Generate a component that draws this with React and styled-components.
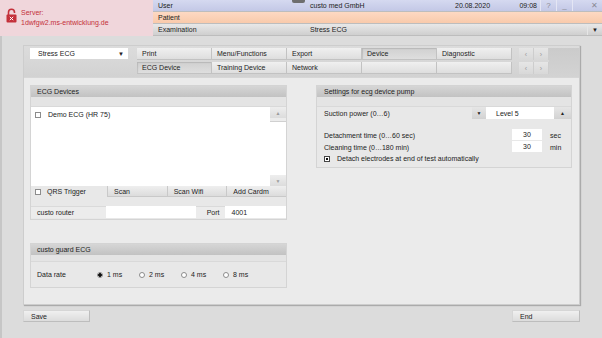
import React from 'react';
import styled, { createGlobalStyle, css } from 'styled-components';

const GlobalStyle = createGlobalStyle`
  html, body {
    margin: 0;
    padding: 0;
  }
  body {
    width: 602px;
    height: 338px;
    overflow: hidden;
    background: #dcdcdc;
    font-family: "Liberation Sans", Arial, sans-serif;
    font-size: 7px;
    color: #222;
  }
  * {
    box-sizing: border-box;
  }
`;

function LockIcon() {
  return (
    <svg width="11" height="15" viewBox="0 0 11 15">
      <path d="M2.5 7V4.2a3 3 0 0 1 6 0V5" fill="none" stroke="#c4303a" strokeWidth="1.6" />
      <rect x="0.5" y="6.5" width="10" height="8" rx="1" fill="#c4303a" />
      <path d="M3.8 8.8l3.4 3.4M7.2 8.8l-3.4 3.4" stroke="#fff" strokeWidth="1" />
    </svg>
  );
}

function App() {
  return (
    <Screen>
      <GlobalStyle />
      <TopBar>
        <ServerBox>
          <LockIcon />
          <ServerText>
            Server:
            <br />
            1dwfgw2.ms-entwicklung.de
          </ServerText>
        </ServerBox>
        <InfoRows>
          <InfoRow $tone="user">
            <RowLabel>User</RowLabel>
            <RowValue $width={145}>custo med GmbH</RowValue>
            <DateCell>20.08.2020</DateCell>
            <TimeCell>09:08</TimeCell>
            <WinButton $width={16}>?</WinButton>
            <WinButton $width={16}>_</WinButton>
            <WinButton $width={30} $alignRight>✕</WinButton>
          </InfoRow>
          <InfoRow $tone="patient">
            <RowLabel>Patient</RowLabel>
          </InfoRow>
          <InfoRow $tone="exam">
            <RowLabel>Examination</RowLabel>
            <RowValue>Stress ECG</RowValue>
            <DropCell>▼</DropCell>
          </InfoRow>
        </InfoRows>
        <Handle />
      </TopBar>

      <Body>
        <Panel>
          <TabBand>
            <ModeSelect>
              <span>Stress ECG</span>
              <SelectArrow>▼</SelectArrow>
            </ModeSelect>
            <TabRows>
              <TabRow>
                <TabGrid>
                  <Tab>Print</Tab>
                  <Tab>Menu/Functions</Tab>
                  <Tab>Export</Tab>
                  <Tab $active>Device</Tab>
                  <Tab>Diagnostic</Tab>
                </TabGrid>
                <Pager>
                  <PagerButton>‹</PagerButton>
                  <PagerButton>›</PagerButton>
                </Pager>
              </TabRow>
              <TabRow>
                <TabGrid>
                  <Tab $active>ECG Device</Tab>
                  <Tab>Training Device</Tab>
                  <Tab>Network</Tab>
                  <Tab />
                  <Tab />
                </TabGrid>
                <Pager>
                  <PagerButton>‹</PagerButton>
                  <PagerButton>›</PagerButton>
                </Pager>
              </TabRow>
            </TabRows>
            <BandFiller />
          </TabBand>

          <Content>
            <Column $width={257} $gap={23}>
              <Group>
                <GroupHeader>ECG Devices</GroupHeader>
                <GroupBand />
                <DeviceList>
                  <ListArea>
                    <ListItem>
                      <CheckBox />
                      <span>Demo ECG (HR 75)</span>
                    </ListItem>
                  </ListArea>
                  <ScrollBar>
                    <ScrollButton>▲</ScrollButton>
                    <ScrollThumb />
                    <ScrollTrack />
                    <ScrollButton>▼</ScrollButton>
                  </ScrollBar>
                </DeviceList>
                <ActionRow>
                  <CheckCell>
                    <CheckBox />
                    <span>QRS Trigger</span>
                  </CheckCell>
                  <FlatButton>Scan</FlatButton>
                  <FlatButton>Scan Wifi</FlatButton>
                  <FlatButton>Add Cardm</FlatButton>
                </ActionRow>
                <Spacer $height={9} />
                <RouterRow>
                  <FieldLabel $width={76}>custo router</FieldLabel>
                  <WhiteField $width={90} />
                  <PortLabel>Port</PortLabel>
                  <WhiteField $width={61}>4001</WhiteField>
                </RouterRow>
                <Spacer $height={1} />
              </Group>

              <Group>
                <GroupHeader>custo guard ECG</GroupHeader>
                <GroupBand $height={7} />
                <RateRow>
                  <RateLabel>Data rate</RateLabel>
                  {['1 ms', '2 ms', '4 ms', '8 ms'].map((rate, i) => (
                    <RadioOption key={rate}>
                      <Radio $checked={i === 0} />
                      <span>{rate}</span>
                    </RadioOption>
                  ))}
                </RateRow>
              </Group>
            </Column>

            <Column $width={256}>
              <Group>
                <GroupHeader $pad={7}>Settings for ecg device pump</GroupHeader>
                <GroupBand />
                <SuctionRow>
                  <SettingLabel>Suction power (0…6)</SettingLabel>
                  <StepButton>▼</StepButton>
                  <LevelField>Level 5</LevelField>
                  <StepButton $up>▲</StepButton>
                </SuctionRow>
                <Spacer $height={10} />
                <TimeRow>
                  <SettingLabel>Detachment time (0…60 sec)</SettingLabel>
                  <NumberField>30</NumberField>
                  <Unit>sec</Unit>
                </TimeRow>
                <TimeRow>
                  <SettingLabel>Cleaning time (0…180 min)</SettingLabel>
                  <NumberField>30</NumberField>
                  <Unit>min</Unit>
                </TimeRow>
                <CheckRow>
                  <CheckBox $checked />
                  <span>Detach electrodes at end of test automatically</span>
                </CheckRow>
              </Group>
            </Column>
          </Content>
        </Panel>

        <Footer>
          <FooterButton $width={67}>Save</FooterButton>
          <FooterButton $width={68}>End</FooterButton>
        </Footer>
      </Body>
    </Screen>
  );
}

const Screen = styled.div`
  width: 602px;
  height: 338px;
  display: flex;
  flex-direction: column;
`;

const TopBar = styled.div`
  position: relative;
  height: 36px;
  display: flex;
`;

const Handle = styled.div`
  position: absolute;
  left: 292px;
  top: 0;
  width: 13px;
  height: 3px;
  border-radius: 0 0 2px 2px;
  background: #6e6e6e;
`;

const ServerBox = styled.div`
  width: 153px;
  display: flex;
  align-items: flex-start;
  gap: 4px;
  padding: 8px 0 0 6px;
  background: #f0d6db;
`;

const ServerText = styled.div`
  color: #c4303a;
  line-height: 10px;
`;

const rowTones = {
  user: css`
    background: linear-gradient(#d5d9f0, #c3c8e6);
  `,
  patient: css`
    background: linear-gradient(#fdd9c3, #f9caab);
  `,
  exam: css`
    background: linear-gradient(#e8e8e8, #cfcfcf);
  `,
};

const InfoRows = styled.div`
  flex: 1;
  display: flex;
  flex-direction: column;
`;

const InfoRow = styled.div`
  height: 12px;
  display: flex;
  align-items: center;
  border-bottom: 1px solid #bdbdbd;
  ${({ $tone }) => rowTones[$tone]};
`;

const RowLabel = styled.div`
  width: 152px;
  padding-left: 5px;
`;

const RowValue = styled.div`
  ${({ $width }) => ($width ? `width: ${$width}px;` : 'flex: 1;')}
  padding-left: 5px;
`;

const DateCell = styled.div`
  width: 60px;
  padding-left: 5px;
`;

const TimeCell = styled.div`
  width: 30px;
  text-align: right;
  padding-right: 3px;
`;

const WinButton = styled.div`
  width: ${({ $width }) => $width}px;
  height: 100%;
  display: flex;
  align-items: center;
  justify-content: ${({ $alignRight }) => ($alignRight ? 'flex-end' : 'center')};
  padding-right: ${({ $alignRight }) => ($alignRight ? '4px' : '0')};
  border-left: 1px solid #e4e6f4;
  color: #8a8a94;
  font-size: 8px;
`;

const DropCell = styled.div`
  width: 15px;
  height: 100%;
  display: flex;
  align-items: center;
  justify-content: center;
  border-left: 1px solid #e6e6e6;
  font-size: 6px;
  color: #222;
`;

const Body = styled.div`
  flex: 1;
  border-left: 2px solid #c6c6c6;
  padding: 9px 0 0 21px;
`;

const Panel = styled.div`
  width: 557px;
  height: 260px;
  display: flex;
  flex-direction: column;
  background: #ebebeb;
  border: 1px solid #cdcdcd;
  box-shadow: 1px 1px 1px rgba(0, 0, 0, 0.22);
`;

const TabBand = styled.div`
  height: 32px;
  display: flex;
  align-items: flex-start;
  padding: 2px 0 0 6px;
  background: linear-gradient(#dcdcdc, #d2d2d2);
  border-bottom: 1px solid #d6d6d6;
`;

const ModeSelect = styled.div`
  width: 98px;
  height: 11px;
  display: flex;
  align-items: center;
  justify-content: space-between;
  padding: 0 4px 0 8px;
  background: #fff;
`;

const SelectArrow = styled.span`
  font-size: 6px;
  color: #222;
`;

const TabRows = styled.div`
  display: flex;
  flex-direction: column;
  gap: 2px;
  margin-left: 9px;
`;

const TabRow = styled.div`
  display: flex;
  gap: 7px;
`;

const TabGrid = styled.div`
  display: grid;
  grid-template-columns: repeat(5, 75px);
`;

const Tab = styled.div`
  height: 12px;
  display: flex;
  align-items: center;
  padding-left: 5px;
  border-right: 1px solid #c2c2c2;
  border-bottom: 1px solid #c2c2c2;
  background: ${({ $active }) =>
    $active ? 'linear-gradient(#d0d0d0, #dedede)' : 'linear-gradient(#f0f0f0, #dedede)'};
  box-shadow: ${({ $active }) => ($active ? 'inset 1px 1px 1px rgba(0,0,0,0.12)' : 'none')};
`;

const Pager = styled.div`
  display: flex;
`;

const PagerButton = styled.div`
  width: 15px;
  height: 12px;
  display: flex;
  align-items: center;
  justify-content: center;
  background: linear-gradient(#e6e6e6, #d8d8d8);
  border-right: 1px solid #cdcdcd;
  color: #9a9a9a;
  font-size: 7px;
`;

const BandFiller = styled.div`
  flex: 1;
  align-self: stretch;
  background: linear-gradient(#cbcbcb, #d3d3d3);
`;

const Content = styled.div`
  flex: 1;
  display: flex;
  align-items: flex-start;
  gap: 29px;
  padding: 7px 6px;
`;

const Column = styled.div`
  width: ${({ $width }) => $width}px;
  display: flex;
  flex-direction: column;
  gap: ${({ $gap }) => $gap || 0}px;
`;

const Group = styled.div`
  display: flex;
  flex-direction: column;
  background: #e8e8e8;
  border: 1px solid #d4d4d4;
`;

const GroupHeader = styled.div`
  height: 11px;
  display: flex;
  align-items: center;
  padding-left: ${({ $pad }) => $pad || 6}px;
  background: linear-gradient(#d6d6d6, #c2c2c2);
`;

const GroupBand = styled.div`
  height: ${({ $height }) => $height || 10}px;
  border-bottom: 1px solid #d9d9d9;
  background: #e4e4e4;
`;

const DeviceList = styled.div`
  height: 79px;
  display: flex;
`;

const ListArea = styled.div`
  flex: 1;
  background: #fff;
  padding-top: 3px;
`;

const ListItem = styled.div`
  display: flex;
  align-items: center;
  gap: 7px;
  padding-left: 4px;
  height: 9px;
`;

const CheckBox = styled.div`
  width: 6px;
  height: 6px;
  flex-shrink: 0;
  border: 1px solid #8c8c8c;
  background: #fff;
  ${({ $checked }) =>
    $checked &&
    css`
      background: #111;
      box-shadow: inset 0 0 0 1px #fff;
      border-color: #444;
    `}
`;

const ScrollBar = styled.div`
  width: 16px;
  display: flex;
  flex-direction: column;
  background: #fff;
`;

const ScrollButton = styled.div`
  height: 11px;
  display: flex;
  align-items: center;
  justify-content: center;
  background: linear-gradient(#eeeeee, #dcdcdc);
  color: #9c9c9c;
  font-size: 5px;
`;

const ScrollThumb = styled.div`
  height: 4px;
  background: #ececec;
  border-bottom: 1px solid #d0d0d0;
`;

const ScrollTrack = styled.div`
  flex: 1;
`;

const ActionRow = styled.div`
  height: 11px;
  display: flex;
`;

const CheckCell = styled.div`
  width: 76px;
  display: flex;
  align-items: center;
  gap: 6px;
  padding-left: 4px;
`;

const FlatButton = styled.div`
  flex: 1;
  display: flex;
  align-items: center;
  padding-left: 6px;
  background: linear-gradient(#efefef, #dcdcdc);
  border-left: 1px solid #c9c9c9;
  border-bottom: 1px solid #c9c9c9;
`;

const Spacer = styled.div`
  height: ${({ $height }) => $height}px;
`;

const RouterRow = styled.div`
  height: 12px;
  display: flex;
`;

const FieldLabel = styled.div`
  width: ${({ $width }) => $width}px;
  display: flex;
  align-items: center;
  padding-left: 6px;
  background: #ececec;
  border-top: 1px solid #dadada;
`;

const WhiteField = styled.div`
  width: ${({ $width }) => $width}px;
  display: flex;
  align-items: center;
  padding-left: 6px;
  background: #fff;
`;

const PortLabel = styled.div`
  width: 30px;
  display: flex;
  align-items: center;
  justify-content: flex-end;
  padding-right: 6px;
  background: #ececec;
  border-top: 1px solid #dadada;
`;

const RateRow = styled.div`
  height: 25px;
  display: flex;
  align-items: center;
`;

const RateLabel = styled.div`
  width: 66px;
  padding-left: 6px;
`;

const RadioOption = styled.div`
  width: 42px;
  display: flex;
  align-items: center;
  gap: 4px;
`;

const Radio = styled.div`
  width: 6px;
  height: 6px;
  border-radius: 50%;
  border: 1px solid #8c8c8c;
  background: ${({ $checked }) => ($checked ? 'radial-gradient(circle, #111 60%, #fff 65%)' : '#fff')};
`;

const SuctionRow = styled.div`
  height: 12px;
  display: flex;
  align-items: stretch;
`;

const SettingLabel = styled.div`
  flex: 1;
  display: flex;
  align-items: center;
  padding-left: 7px;
`;

const StepButton = styled.div`
  width: ${({ $up }) => ($up ? 17 : 14)}px;
  display: flex;
  align-items: center;
  justify-content: center;
  background: linear-gradient(#e6e6e6, #d2d2d2);
  color: #222;
  font-size: 5px;
`;

const LevelField = styled.div`
  width: 68px;
  display: flex;
  align-items: center;
  padding-left: 10px;
  background: #fff;
`;

const TimeRow = styled.div`
  height: 12px;
  display: flex;
  align-items: stretch;
`;

const NumberField = styled.div`
  width: 30px;
  height: 11px;
  display: flex;
  align-items: center;
  justify-content: center;
  background: #fff;
`;

const Unit = styled.div`
  width: 29px;
  display: flex;
  align-items: center;
  padding-left: 8px;
`;

const CheckRow = styled.div`
  height: 11px;
  display: flex;
  align-items: center;
  gap: 7px;
  padding-left: 7px;
  margin-bottom: 3px;
`;

const Footer = styled.div`
  width: 557px;
  display: flex;
  justify-content: space-between;
  padding-top: 5px;
`;

const FooterButton = styled.div`
  width: ${({ $width }) => $width}px;
  height: 12px;
  display: flex;
  align-items: center;
  padding-left: 7px;
  background: linear-gradient(#f0f0f0, #dcdcdc);
  border: 1px solid #bdbdbd;
  border-top-color: #d6d6d6;
  border-left-color: #d6d6d6;
`;

export default App;
